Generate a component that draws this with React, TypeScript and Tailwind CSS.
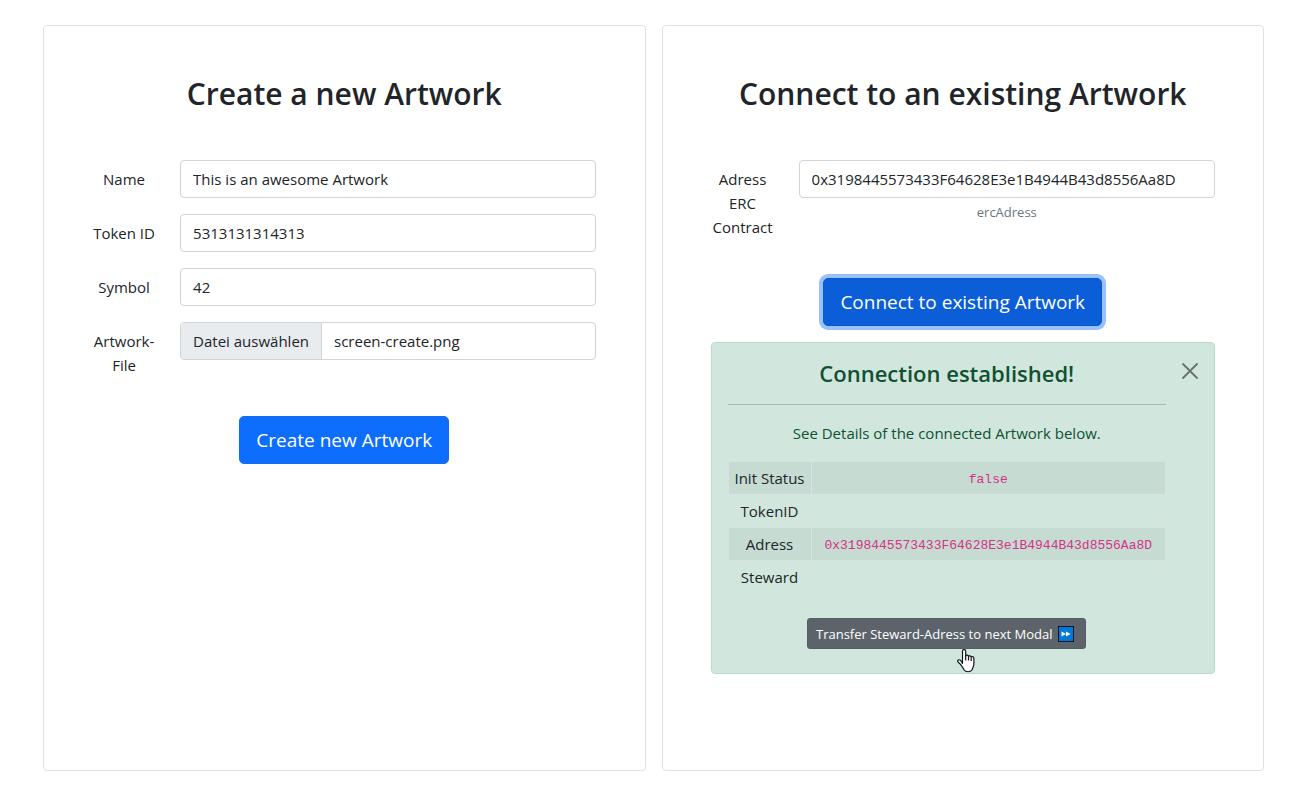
import { useState } from "react";
import type { ReactNode } from "react";

const control =
  "block h-[38px] w-full rounded border border-[#ced4da] bg-white px-3 text-[15px] leading-6 text-[#212529] outline-none";

function Card({ title, children }: { title: string; children: ReactNode }) {
  return (
    <section className="rounded border border-[#dee2e6] px-12 pt-[50px] pb-20 text-center">
      <h2 className="mb-12 text-[30px] leading-9 font-semibold">{title}</h2>
      {children}
    </section>
  );
}

function Field({ id, label, children }: { id: string; label: string; children: ReactNode }) {
  return (
    <div className="-mx-3 mb-4 flex">
      <label htmlFor={id} className="w-1/6 px-3 py-[7px]">
        {label}
      </label>
      <div className="w-5/6 px-3">{children}</div>
    </div>
  );
}

function FastForward() {
  return (
    <svg viewBox="0 0 16 16" className="h-4 w-4" aria-hidden="true">
      <rect x="0.5" y="0.5" width="15" height="15" fill="#0078d7" stroke="#0b1420" />
      <path d="M3.5 5.5 8 8l-4.500 2.500zM8 5.500 12.500 8 8 10.500z" fill="#fff" />
    </svg>
  );
}

function HandPointer() {
  return (
    <svg viewBox="0 0 19 24" className="absolute top-[31px] left-[150px] h-6 w-[19px]" aria-hidden="true">
      <path
        d="M5.500 14.500V2.300c0-2.200 3.200-2.200 3.200 0v4.500c.8-1 2.500-.8 2.800.5.800-.8 2.400-.5 2.700.7 1-.8 2.700-.2 2.700 1.400v5.400c0 3-1.500 4.400-2 6.200-1.700 2.300-6 2.300-7.800 0-.6-1.900-2.300-3.600-3.600-5.600C2.500 14.400 1.200 13.500.8 12.500c-.5-1.300.9-2.200 2.200-1.500 1 .6 1.700 1.800 2.500 3.500z"
        fill="#fff"
        stroke="#10131c"
        strokeWidth="1.200"
        strokeLinejoin="round"
      />
      <path d="M8.700 6.500v5M11.500 7.500v4M14.200 8.300v3.600" fill="none" stroke="#10131c" strokeWidth="1.200" />
    </svg>
  );
}

const address = "0x3198445573433F64628E3e1B4944B43d8556Aa8D";

const details = [
  { name: "Init Status", value: "false" },
  { name: "TokenID", value: "" },
  { name: "Adress", value: address },
  { name: "Steward", value: "" },
];

function ConnectionAlert({ onClose }: { onClose: () => void }) {
  return (
    <div
      role="alert"
      className="relative my-4 rounded border border-[#badbcc] bg-[#d1e7dd] py-4 pr-12 pl-4 text-[#0f5132]"
    >
      <h4 className="text-[22px] leading-[29px] font-semibold">Connection established!</h4>
      <hr className="my-4 border-[#0f5132] opacity-25" />
      <p className="mb-4">See Details of the connected Artwork below.</p>
      <table className="mb-6 w-full border-collapse text-[#212529]">
        <tbody>
          {details.map((row) => (
            <tr key={row.name} className="odd:bg-[#c6dbd2]">
              <th scope="row" className="h-[33px] w-[83px] border border-[#d9e2e3] p-0 font-normal whitespace-nowrap">
                {row.name}
              </th>
              <td className="border border-[#d9e2e3] p-0">
                <code className="font-['Liberation_Mono',monospace] text-[13px] text-[#d63384]">{row.value}</code>
              </td>
            </tr>
          ))}
        </tbody>
      </table>
      <div className="relative mb-2 inline-flex align-top">
        <button
          type="button"
          className="flex h-[31px] items-center gap-1.5 rounded-[3px] border border-[#565e64] bg-[#5c636a] pr-[11px] pl-2 text-[13px] leading-5 whitespace-nowrap text-white"
        >
          Transfer Steward-Adress to next Modal
          <FastForward />
        </button>
        <HandPointer />
      </div>
      <button type="button" aria-label="Close" onClick={onClose} className="absolute top-5 right-4 opacity-50">
        <svg viewBox="0 0 16 16" className="h-4 w-4" aria-hidden="true">
          <path d="M1 1l14 14M15 1 1 15" stroke="#000" strokeWidth="1.800" strokeLinecap="round" />
        </svg>
      </button>
    </div>
  );
}

export default function App() {
  const [fileName, setFileName] = useState("screen-create.png");
  const [connected, setConnected] = useState(true);

  return (
    <main className="grid grid-cols-2 gap-4 bg-white pt-[25px] pr-[30px] pb-[17px] pl-[43px] font-['Open_Sans',sans-serif] text-[15px] leading-6 text-[#212529]">
      <Card title="Create a new Artwork">
        <form onSubmit={(e) => e.preventDefault()}>
          <Field id="name" label="Name">
            <input id="name" type="text" defaultValue="This is an awesome Artwork" className={control} />
          </Field>
          <Field id="token" label="Token ID">
            <input id="token" type="text" defaultValue="5313131314313" className={control} />
          </Field>
          <Field id="symbol" label="Symbol">
            <input id="symbol" type="text" defaultValue="42" className={control} />
          </Field>
          <Field id="file" label="Artwork-File">
            <label className="relative flex h-[38px] overflow-hidden rounded border border-[#ced4da] leading-9">
              <input
                id="file"
                type="file"
                className="sr-only"
                onChange={(e) => setFileName(e.target.files?.[0]?.name ?? "")}
              />
              <span className="border-r border-[#ced4da] bg-[#e9ecef] px-3">Datei auswählen</span>
              <span className="px-3">{fileName}</span>
            </label>
          </Field>
          <button
            type="submit"
            className="mx-auto mt-8 block h-12 rounded-[5px] border border-[#0d6efd] bg-[#0d6efd] px-4 text-[19px] leading-[30px] text-white"
          >
            Create new Artwork
          </button>
        </form>
      </Card>

      <Card title="Connect to an existing Artwork">
        <form onSubmit={(e) => e.preventDefault()}>
          <Field id="address" label="Adress ERC Contract">
            <input id="address" type="text" defaultValue={address} aria-describedby="address-help" className={control} />
            <div id="address-help" className="mt-1 text-[13px] leading-5 text-[#6c757d]">
              ercAdress
            </div>
          </Field>
          <button
            type="submit"
            onClick={() => setConnected(true)}
            className="mx-auto mt-8 block h-12 rounded-[5px] border border-[#0a58ca] bg-[#0b5ed7] px-4 text-[19px] leading-[30px] text-white shadow-[0_0_0_4px_#98c1fe]"
          >
            Connect to existing Artwork
          </button>
        </form>
        {connected && <ConnectionAlert onClose={() => setConnected(false)} />}
      </Card>
    </main>
  );
}
